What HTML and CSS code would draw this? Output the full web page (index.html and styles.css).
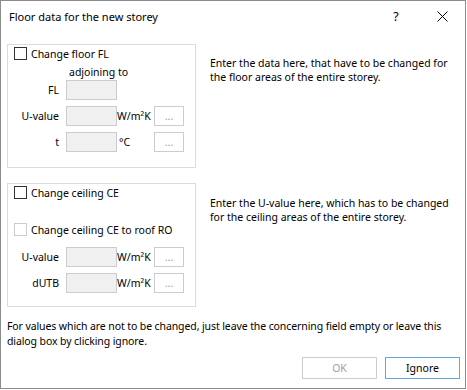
FILE: index.html
```html
<!DOCTYPE html>
<html>
<head>
<meta charset="utf-8">
<link rel="stylesheet" href="styles.css">
</head>
<body>
<div class="window">
  <div class="titlebar">
    <span class="title">Floor data for the new storey</span>
    <span class="tbtn help">?</span>
    <span class="tbtn close"><svg width="11" height="11" viewBox="0 0 11 11"><path d="M0.5 0.5 L10.5 10.5 M10.5 0.5 L0.5 10.5" stroke="#000" stroke-width="1" fill="none"/></svg></span>
  </div>
  <div class="client">
    <div class="section">
      <div class="group g1">
        <div class="check"><span class="box"></span><span>Change floor FL</span></div>
        <div class="hint">adjoining to</div>
        <div class="fields">
          <span class="lbl">FL</span><span class="input"></span><span></span><span></span>
          <span class="lbl">U-value</span><span class="input"></span><span class="unit">W/m²K</span><span class="dots">...</span>
          <span class="lbl">t</span><span class="input"></span><span class="unit deg">°C</span><span class="dots">...</span>
        </div>
      </div>
      <p class="desc d1">Enter the data here, that have to be changed for<br>the floor areas of the entire storey.</p>
    </div>
    <div class="section">
      <div class="group g2">
        <div class="check"><span class="box"></span><span>Change ceiling CE</span></div>
        <div class="check disabled"><span class="box"></span><span>Change ceiling CE to roof RO</span></div>
        <div class="fields">
          <span class="lbl">U-value</span><span class="input"></span><span class="unit">W/m²K</span><span class="dots">...</span>
          <span class="lbl">dUTB</span><span class="input"></span><span class="unit">W/m²K</span><span class="dots">...</span>
        </div>
      </div>
      <p class="desc d2">Enter the U-value here, which has to be changed<br>for the ceiling areas of the entire storey.</p>
    </div>
    <p class="note">For values which are not to be changed, just leave the concerning field empty or leave this<br>dialog box by clicking ignore.</p>
    <div class="buttons">
      <span class="btn disabled">OK</span>
      <span class="btn default">Ignore</span>
    </div>
  </div>
</div>
</body>
</html>
```
FILE: styles.css
```css
body {
  margin: 0;
  background: #fff;
  font-family: "Noto Sans", sans-serif;
  font-size: 10.5px;
  color: #000;
}
.window {
  width: 466px;
  height: 389px;
  box-sizing: border-box;
  border: 1px solid #8c8c8c;
  display: flex;
  flex-direction: column;
}
.titlebar {
  height: 30px;
  display: flex;
  align-items: center;
}
.title {
  flex: 1;
  padding-left: 8px;
  font-size: 11px;
}
.tbtn {
  width: 46px;
  height: 30px;
  display: flex;
  align-items: center;
  justify-content: center;
  font-size: 12.5px;
}
.close svg { display: block; }
.client {
  flex: 1;
  padding: 13px 5px 0 6px;
  display: flex;
  flex-direction: column;
}
.section {
  display: flex;
  align-items: flex-start;
}
.section + .section { margin-top: 15px; }
.group {
  width: 189px;
  height: 124px;
  box-sizing: border-box;
  border: 1px solid #dcdcdc;
  padding-top: 2px;
  flex: none;
}
.check {
  display: flex;
  align-items: center;
  height: 13px;
  padding-left: 6px;
  gap: 4px;
  white-space: nowrap;
}
.check.disabled { margin-top: 24px; }
.box {
  width: 13px;
  height: 13px;
  box-sizing: border-box;
  border: 1px solid #333;
  background: #fff;
  flex: none;
}
.check.disabled .box { border-color: #cccccc; }
.hint {
  margin: 5px 0 0 61px;
  line-height: 15px;
}
.fields {
  display: grid;
  grid-template-columns: 58px 51px 37px 30px;
  grid-auto-rows: 20px;
  row-gap: 6px;
  align-items: center;
}
.g2 .fields { margin-top: 11px; }
.lbl {
  text-align: right;
  padding-right: 7px;
}
.input {
  height: 20px;
  box-sizing: border-box;
  border: 1px solid #cccccc;
  background: #f0f0f0;
}
.unit { white-space: nowrap; }
.deg { padding-left: 2px; }
.dots {
  height: 20px;
  box-sizing: border-box;
  border: 1px solid #cccccc;
  background: #fff;
  color: #a0a0a0;
  text-align: center;
  line-height: 18px;
}
.desc {
  margin: 0 0 0 14px;
  line-height: 14px;
  white-space: nowrap;
}
.d1 { margin-top: 12px; }
.d2 { margin-top: 13px; }
.note {
  margin: 12px 0 0 0;
  line-height: 15px;
  white-space: nowrap;
  letter-spacing: -0.1px;
}
.buttons {
  margin-top: 8px;
  display: flex;
  justify-content: flex-end;
  gap: 8px;
}
.btn {
  width: 75px;
  height: 22px;
  box-sizing: border-box;
  border: 1px solid #cccccc;
  background: #fff;
  display: flex;
  align-items: center;
  justify-content: center;
}
.btn.disabled { color: #a0a0a0; }
.btn.default { border-color: #5fa8dd; }
```
